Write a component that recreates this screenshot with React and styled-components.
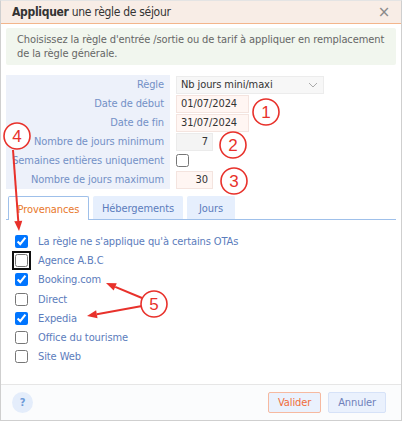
import React from "react";
import styled, { createGlobalStyle } from "styled-components";

const Global = createGlobalStyle`
  html, body { margin: 0; padding: 0; background: #fff; }
  * { box-sizing: border-box; }
  body { font-family: "DejaVu Sans Condensed", "DejaVu Sans", sans-serif; }
`;

const FS = "11px";
const LS = "-0.1px";

const Dialog = styled.div`
  position: relative;
  width: 402px;
  height: 421px;
  border: 1px solid #cfcfcf;
  border-top-color: #e4e4e4;
  display: flex;
  flex-direction: column;
  background: #fff;
  overflow: hidden;
  font-size: ${FS};
  letter-spacing: ${LS};
`;

const Header = styled.div`
  height: 23px;
  flex: none;
  background: #f8ede6;
  border-bottom: 1px solid #f3b58b;
  display: flex;
  align-items: center;
  justify-content: space-between;
  padding: 0 11px 0 11px;
  font-size: 12px;
  letter-spacing: -0.3px;
  color: #333;
`;

const Title = styled.div`
  b { font-weight: 600; }
`;

const Close = styled.span`
  color: #8a8a8a;
  font-size: 15px;
  line-height: 1;
  font-family: "DejaVu Sans", sans-serif;
`;

const Body = styled.div`
  flex: 1;
  padding: 4px 5px 0 5px;
  display: flex;
  flex-direction: column;
`;

const Info = styled.div`
  background: #f1f6ee;
  border-radius: 2px;
  padding: 5px 11px 4px 11px;
  line-height: 14px;
  color: #666;
  height: 37px;
`;

const Form = styled.div`
  margin-top: 10px;
  display: grid;
  grid-template-columns: 164px 1fr;
  grid-auto-rows: 19px;
`;

const Label = styled.div`
  background: #edf1fa;
  color: #7390c6;
  white-space: nowrap;
  padding-right: 6px;
  display: flex;
  align-items: center;
  justify-content: flex-end;
`;

const Cell = styled.div`
  display: flex;
  align-items: center;
  padding-left: 6px;
`;

const Select = styled.div`
  width: 148px;
  height: 18px;
  background: #f7f7f7;
  border: 1px solid #ececec;
  color: #333;
  display: flex;
  align-items: center;
  justify-content: space-between;
  padding: 0 5px 0 4px;
`;

const Input = styled.div`
  width: ${(p) => p.$w}px;
  height: 18px;
  background: ${(p) => (p.$ro ? "#f4f4f4" : "#fff6f3")};
  border: 1px solid ${(p) => (p.$ro ? "#ebebeb" : "#f4e4df")};
  color: #333;
  display: flex;
  align-items: center;
  justify-content: ${(p) => (p.$right ? "flex-end" : "flex-start")};
  padding: 0 4px;
`;

const Check = styled.input`
  width: 13px;
  height: 13px;
  margin: 0;
  accent-color: #0075ff;
  flex: none;
  ${(p) => (p.$focus ? "outline: 2px solid #101010; outline-offset: 1px; border-radius: 3px;" : "")}
`;

const Tabs = styled.div`
  margin-top: 7px;
  display: flex;
  gap: 4px;
  padding-left: 2px;
  border-bottom: 1px solid #9fc0ea;
  height: 24px;
`;

const Tab = styled.div`
  width: ${(p) => p.$w}px;
  height: ${(p) => (p.$active ? "24px" : "23px")};
  display: flex;
  align-items: center;
  justify-content: center;
  background: ${(p) => (p.$active ? "#fff" : "#e6effd")};
  color: ${(p) => (p.$active ? "#e8782c" : "#5b7cbc")};
  border: 1px solid ${(p) => (p.$active ? "#9fc0ea" : "#e6effd")};
  border-bottom: none;
  border-radius: 2px 2px 0 0;
  margin-bottom: ${(p) => (p.$active ? "-1px" : "0")};
  padding-top: 1px;
`;

const List = styled.div`
  padding: 12px 0 0 9px;
  display: flex;
  flex-direction: column;
`;

const Item = styled.label`
  height: 19.2px;
  display: flex;
  align-items: center;
  gap: 10px;
  color: #5b7cbc;
`;

const Footer = styled.div`
  height: 36px;
  flex: none;
  border-top: 1px solid #e6e6e6;
  background: #fbfcfd;
  display: flex;
  align-items: center;
  justify-content: space-between;
  padding: 0 15px 0 11px;
`;

const Help = styled.div`
  width: 21px;
  height: 21px;
  border-radius: 50%;
  background: #e4edfb;
  color: #6d9bd8;
  font-weight: bold;
  display: flex;
  align-items: center;
  justify-content: center;
`;

const Buttons = styled.div`
  display: flex;
  gap: 7px;
`;

const Button = styled.div`
  height: 21px;
  padding: 0 ${(p) => p.$px}px;
  display: flex;
  align-items: center;
  border-radius: 2px;
  background: #eaf1fd;
  border: 1px solid ${(p) => (p.$primary ? "#f6b9a0" : "#d6e2f8")};
  color: ${(p) => (p.$primary ? "#f06c3a" : "#6e80ba")};
`;

const Overlay = styled.svg`
  position: absolute;
  left: -1px;
  top: -1px;
  pointer-events: none;
`;

const RED = "#e8312b";

function Bubble({ x, y, n }) {
  return (
    <g>
      <circle cx={x} cy={y} r={13} fill="#fff" stroke={RED} strokeWidth={1.6} />
      <text
        x={x}
        y={y + 6}
        textAnchor="middle"
        fontSize="17"
        fill={RED}
        fontFamily="Liberation Sans, sans-serif"
      >
        {n}
      </text>
    </g>
  );
}

function Arrow({ x1, y1, x2, y2 }) {
  const a = Math.atan2(y2 - y1, x2 - x1);
  const L = 10, W = 4;
  const bx = x2 - L * Math.cos(a);
  const by = y2 - L * Math.sin(a);
  const px = -Math.sin(a) * W;
  const py = Math.cos(a) * W;
  return (
    <g>
      <line x1={x1} y1={y1} x2={bx} y2={by} stroke={RED} strokeWidth={2} />
      <polygon points={`${x2},${y2} ${bx + px},${by + py} ${bx - px},${by - py}`} fill={RED} />
    </g>
  );
}

const Chevron = () => (
  <svg width="10" height="6" viewBox="0 0 10 6">
    <path d="M1 1 L5 5 L9 1" fill="none" stroke="#aaa" strokeWidth="1" />
  </svg>
);

const items = [
  { t: "La règle ne s'applique qu'à certains OTAs", c: true },
  { t: "Agence A.B.C", c: false, f: true },
  { t: "Booking.com", c: true },
  { t: "Direct", c: false },
  { t: "Expedia", c: true },
  { t: "Office du tourisme", c: false },
  { t: "Site Web", c: false },
];

export default function App() {
  return (
    <>
      <Global />
      <Dialog>
        <Header>
          <Title>
            <b>Appliquer</b> une règle de séjour
          </Title>
          <Close>×</Close>
        </Header>
        <Body>
          <Info>
            Choisissez la règle d'entrée /sortie ou de tarif à appliquer en remplacement de la règle générale.
          </Info>
          <Form>
            <Label>Règle</Label>
            <Cell>
              <Select>
                <span>Nb jours mini/maxi</span>
                <Chevron />
              </Select>
            </Cell>
            <Label>Date de début</Label>
            <Cell>
              <Input $w={73}>01/07/2024</Input>
            </Cell>
            <Label>Date de fin</Label>
            <Cell>
              <Input $w={73}>31/07/2024</Input>
            </Cell>
            <Label>Nombre de jours minimum</Label>
            <Cell>
              <Input $w={37} $ro $right>7</Input>
            </Cell>
            <Label>Semaines entières uniquement</Label>
            <Cell>
              <Check type="checkbox" readOnly />
            </Cell>
            <Label>Nombre de jours maximum</Label>
            <Cell>
              <Input $w={37} $right>30</Input>
            </Cell>
          </Form>
          <Tabs>
            <Tab $w={81} $active>Provenances</Tab>
            <Tab $w={90}>Hébergements</Tab>
            <Tab $w={48}>Jours</Tab>
          </Tabs>
          <List>
            {items.map((it) => (
              <Item key={it.t}>
                <Check type="checkbox" checked={it.c} readOnly $focus={it.f} />
                {it.t}
              </Item>
            ))}
          </List>
        </Body>
        <Footer>
          <Help>?</Help>
          <Buttons>
            <Button $primary $px={9}>Valider</Button>
            <Button $px={9}>Annuler</Button>
          </Buttons>
        </Footer>
        <Overlay width="402" height="421" viewBox="0 0 402 421">
          <Arrow x1={13} y1={150} x2={19} y2={231} />
          <Arrow x1={142} y1={298} x2={106} y2={283} />
          <Arrow x1={142} y1={306} x2={87} y2={316} />
          <Bubble x={266} y={112} n="1" />
          <Bubble x={233} y={145} n="2" />
          <Bubble x={234} y={181} n="3" />
          <Bubble x={17} y={136} n="4" />
          <Bubble x={154} y={304} n="5" />
        </Overlay>
      </Dialog>
    </>
  );
}
